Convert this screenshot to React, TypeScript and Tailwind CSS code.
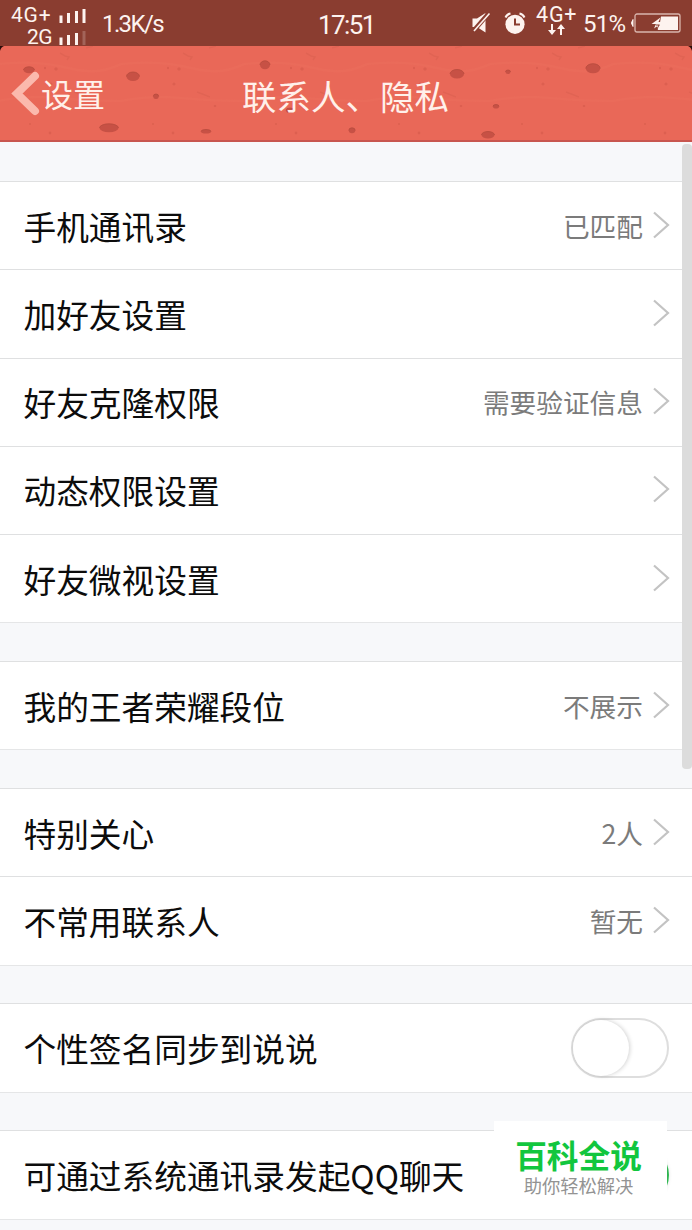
import React from "react";

type Item = { label: string; value?: string; toggle?: "on" | "off" };

const groups: Item[][] = [
  [
    { label: "手机通讯录", value: "已匹配" },
    { label: "加好友设置" },
    { label: "好友克隆权限", value: "需要验证信息" },
    { label: "动态权限设置" },
    { label: "好友微视设置" },
  ],
  [{ label: "我的王者荣耀段位", value: "不展示" }],
  [
    { label: "特别关心", value: "2人" },
    { label: "不常用联系人", value: "暂无" },
  ],
  [{ label: "个性签名同步到说说", toggle: "off" }],
  [{ label: "可通过系统通讯录发起QQ聊天", toggle: "on" }],
];

function Signal({ weak = false }: { weak?: boolean }) {
  return (
    <svg width="27" height="14" viewBox="0 0 27 14" fill="#fdf3ef">
      <rect x="0.500" y="6.500" width="3" height="7.500" />
      <rect x="8" y="4" width="3" height="10" />
      <rect x="16" y="2" width="3" height="12" />
      <rect x="23.500" y="0" width="3" height="14" opacity={weak ? 0.22 : 1} />
    </svg>
  );
}

function StatusBar() {
  return (
    <div className="flex h-[46px] shrink-0 bg-[#8a3d30] font-['Roboto','Noto_Sans_CJK_SC',sans-serif] text-[#fdf3ef]">
      <div className="flex w-[102px] flex-col">
        <div className="flex h-[23px] items-end pl-[11px]">
          <span className="w-[48px] whitespace-nowrap text-[21px] leading-[16px] tracking-[0.8px]">4G+</span>
          <Signal />
        </div>
        <div className="flex h-[22px] items-end pl-[27px]">
          <span className="w-[32px] text-[21px] leading-[16px] tracking-[-0.5px]">2G</span>
          <Signal weak />
        </div>
      </div>
      <div className="w-[216px] pt-[9px] text-[24px] leading-[30px] tracking-[-1.6px]">1.3K/s</div>
      <div className="w-[153px] pt-[9px] text-[26px] leading-[32px] tracking-[-1.6px]">17:51</div>
      <svg width="20" height="22" viewBox="0 0 20 22" className="mt-3" fill="none">
        <path d="M1.500 6.500h4.500L14.500 1v19.500L6 15H1.500z" fill="#fdf3ef" />
        <path d="M2 19.500 18 1" stroke="#8a3d30" strokeWidth="4.500" />
        <path d="M3 19 18.500 1.500" stroke="#fdf3ef" strokeWidth="1.600" />
      </svg>
      <svg width="22" height="24" viewBox="0 0 22 24" className="ml-[13px] mt-[11px]" fill="none">
        <circle cx="11" cy="13.300" r="9.600" fill="#fdf3ef" />
        <path d="M1.500 6.500Q3 3.200 6.500 2.500M20.500 6.500Q19 3.200 15.500 2.500" stroke="#fdf3ef" strokeWidth="2" />
        <path d="M11 7.500v6h5" stroke="#8a3d30" strokeWidth="2" />
      </svg>
      <div className="ml-[10px] flex w-[47px] flex-col items-start pt-[6px]">
        <span className="whitespace-nowrap text-[21.500px] leading-[18px] tracking-[0.8px]">4G+</span>
        <svg width="18" height="11" viewBox="0 0 18 11" className="ml-[12px]" fill="#fdf3ef">
          <path d="M3 0h2v6h3L4 11 0 6h3zM12 11h2V5h3L13 0 9 5h3z" />
        </svg>
      </div>
      <div className="w-[47px] whitespace-nowrap pt-[9px] text-[24px] leading-[31px] tracking-[-0.7px]">51%</div>
      <svg width="52" height="20" viewBox="0 0 52 20" className="mt-[13px] shrink-0" fill="none">
        <path d="M3 6.500Q0 10 3 13.500z" fill="#fdf3ef" stroke="#fdf3ef" />
        <rect x="5" y="1" width="45" height="18" rx="2" stroke="#d9b5ad" strokeWidth="1.300" />
        <path d="M31 3.500h17v13.500H28l-1.500-4.500h3z" fill="#fdf3ef" />
        <path d="m30.500 4.500-9 6.500h4.500l-2 4.500 9-6.500h-4.500z" fill="#fdf3ef" />
        <path d="M26 12h3l-2 4" stroke="#8a3d30" strokeWidth="1" />
      </svg>
    </div>
  );
}

const holes = [
  [29, 24, 5.5, 3.2], [133, 30.5, 6.5, 4.5], [156, 50.5, 2.7, 2.5],
  [109, 82, 9.5, 4.2], [206, 85.5, 5, 2], [265, 19, 5, 4.2],
  [290, 64.5, 4, 2.5], [352, 84.5, 3.2, 2.7], [457, 28, 7, 4.5],
  [508, 26, 2.5, 2], [496, 60.5, 3, 2], [488, 89, 6.5, 3.5],
  [593, 22.5, 7.2, 4.8],
];

function HeaderTexture() {
  return (
    <svg width="692" height="96" viewBox="0 0 692 96" className="absolute inset-0" fill="none">
      <defs>
        <pattern id="grain" x="-2" width="123" height="96" patternUnits="userSpaceOnUse">
          <g fill="#c95243" opacity="0.400">
            <circle cx="58" cy="23" r="1.800" /><circle cx="47" cy="22" r="1.200" />
            <circle cx="53" cy="38" r="1.600" /><circle cx="52" cy="87" r="1.400" />
            <circle cx="94" cy="60" r="1.300" /><circle cx="32" cy="78" r="1" />
          </g>
          <path d="m62 7 5 3 4 1-2 3M76 46l8 3 5 2M88 2l7-2" stroke="#c95243" strokeWidth="1.600" opacity="0.250" />
          <path d="M0 55Q30 49 60 52T123 55M0 18Q40 14 70 22T123 18" stroke="#f17867" strokeWidth="2" opacity="0.150" />
        </pattern>
      </defs>
      <rect width="692" height="96" fill="url(#grain)" />
      {holes.map(([x, y, rx, ry], i) => (
        <g key={i}>
          <ellipse cx={x} cy={y} rx={rx} ry={ry} fill="#c75145" />
          <path d={`M${x - rx} ${y}A${rx} ${ry} 0 0 1 ${x + rx} ${y}`} stroke="#b64b3e" strokeWidth="0.8" />
        </g>
      ))}
      <path d="M0 0h4Q1 1 0 5zM692 0h-4q3 1 4 5z" fill="#2a0d0a" />
      <path d="M0 95h692" stroke="#c8564f" strokeWidth="2" />
    </svg>
  );
}

function Header() {
  return (
    <header className="relative h-24 shrink-0 bg-[#e96858]">
      <HeaderTexture />
      <div className="relative flex h-full text-[#fff0ea]">
        <svg width="30" height="48" viewBox="0 0 30 48" className="ml-[11px] mt-[24px] shrink-0" fill="none">
          <path d="M24 6 6 23.500 24 41" stroke="#fbb9ad" strokeWidth="8" strokeLinecap="round" strokeLinejoin="miter" />
        </svg>
        <span className="w-[201px] pt-[24px] text-[32px] leading-[46px]">设置</span>
        <h1 className="whitespace-nowrap pt-[26px] text-[34.500px] leading-[46px]">联系人、隐私</h1>
      </div>
    </header>
  );
}

function Chevron() {
  return (
    <svg width="18" height="30" viewBox="0 0 18 30" className="ml-[9px] mr-[22px] shrink-0" fill="none">
      <path d="m2 1.500 14 12.500L2 26.500" stroke="#c3c3c3" strokeWidth="2.200" />
    </svg>
  );
}

function Toggle({ on }: { on: boolean }) {
  return (
    <div
      className={
        on
          ? "mr-[23px] flex h-[60px] w-[98px] justify-end rounded-full bg-[#35c759] p-[2px]"
          : "mr-[23px] flex h-[60px] w-[98px] rounded-full border-2 border-[#dedede] bg-white"
      }
    >
      <div className="h-[56px] w-[56px] rounded-full bg-white shadow-[1px_0px_4px_rgba(0,0,0,0.18)]" />
    </div>
  );
}

function Row({ item }: { item: Item }) {
  return (
    <div className="flex h-[88.25px] items-center border-t border-[#dfe0e1] pl-[23.500px]">
      <span className="mr-auto max-w-[460px] whitespace-nowrap text-[32.7px] leading-[48px] text-[#0c0c0c]">{item.label}</span>
      {item.value && <span className="whitespace-nowrap text-[26.700px] leading-[40px] text-[#7b7b7b]">{item.value}</span>}
      {item.toggle ? <Toggle on={item.toggle === "on"} /> : <Chevron />}
    </div>
  );
}

export default function App() {
  return (
    <div className="relative flex h-[1230px] w-[692px] flex-col overflow-hidden bg-[#f7f8fa] font-['Noto_Sans_CJK_SC',sans-serif]">
      <StatusBar />
      <Header />
      <main className="flex flex-col gap-[37.75px] pt-[39px]">
        {groups.map((group, g) => (
          <section key={g} className="border-b border-[#e5e6e7] bg-white">
            {group.map((item) => (
              <Row key={item.label} item={item} />
            ))}
          </section>
        ))}
      </main>
      <div className="absolute right-0 top-[144px] h-[625px] w-[10px] rounded-[4px] bg-[#dcdcdc]" />
      <div className="absolute left-[494px] top-[1121px] flex h-[87px] w-[173px] flex-col items-center bg-white pr-[4px] pt-[11px]">
        <span className="whitespace-nowrap text-[31.700px] font-bold leading-[44px] text-[#12c63e]">百科全说</span>
        <span className="whitespace-nowrap text-[18.300px] leading-[18px] text-[#939393]">助你轻松解决</span>
      </div>
    </div>
  );
}
